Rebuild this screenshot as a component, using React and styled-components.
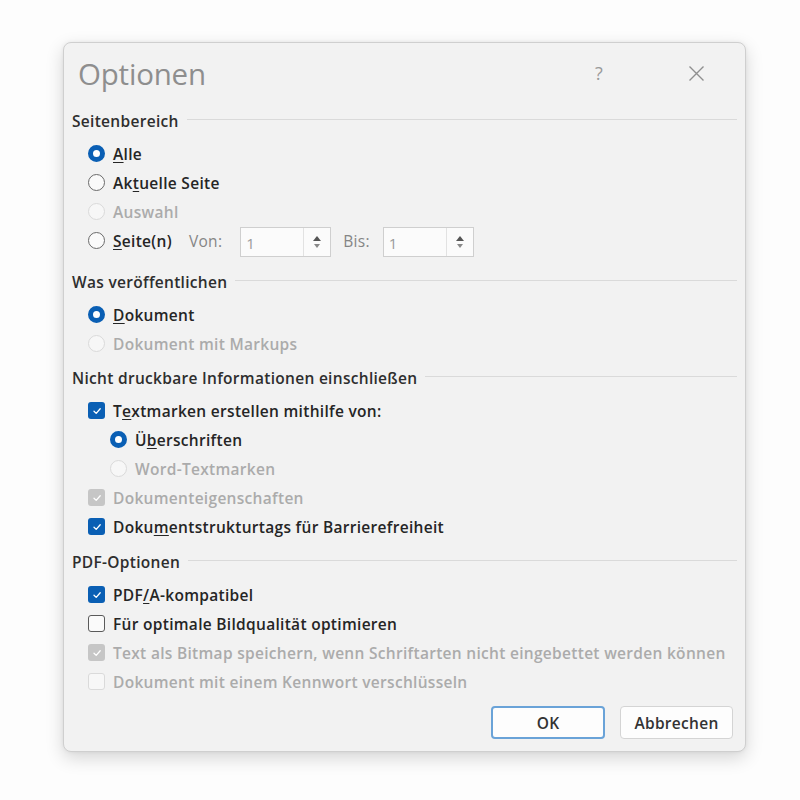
import React from "react";
import styled, { createGlobalStyle, css } from "styled-components";

const Global = createGlobalStyle`
  html, body { margin: 0; padding: 0; background: #fdfdfd; }
  body { font-family: "Open Sans", "Noto Sans", sans-serif; }
`;

const Page = styled.div`
  width: 800px;
  height: 800px;
  padding: 42px 0 0 63px;
  box-sizing: border-box;
`;

const Dialog = styled.div`
  width: 683px;
  height: 710px;
  box-sizing: border-box;
  background: #f2f2f2;
  border: 1px solid #cfcfcf;
  border-radius: 8px;
  box-shadow: 0 6px 18px rgba(0, 0, 0, 0.16), 0 0 4px rgba(0, 0, 0, 0.06);
  padding: 0 8px 12px 8px;
  display: flex;
  flex-direction: column;
`;

const TitleBar = styled.div`
  height: 62px;
  display: flex;
  align-items: center;
  padding-left: 6px;
  padding-right: 16px;
`;

const Title = styled.div`
  flex: 1;
  font-family: "Open Sans", sans-serif;
  font-weight: 400;
  font-size: 29.5px;
  color: #8e8e8e;
  letter-spacing: -0.2px;
`;

const TitleActions = styled.div`
  display: flex;
  gap: 47px;
`;

const TitleButton = styled.div`
  width: 50px;
  height: 30px;
  display: flex;
  justify-content: center;
  align-items: center;
  color: #9a9a9a;
  font-size: 18px;
`;

const Section = styled.div`
  margin-top: ${(p) => p.$mt}px;
  display: flex;
  flex-direction: column;
`;

const textStyle = css`
  font-size: 15.5px;
  font-weight: 600;
  letter-spacing: 0.3px;
`;

const Header = styled.div`
  height: 24px;
  display: flex;
  align-items: center;
  gap: 8px;
  ${textStyle};
  color: #2e2e2e;
  &::after {
    content: "";
    flex: 1;
    height: 1px;
    background: #dadada;
    margin-top: -3px;
  }
`;

const Rows = styled.div`
  padding-top: 6px;
  padding-left: 16px;
  display: flex;
  flex-direction: column;
`;

const Row = styled.div`
  height: 29px;
  display: flex;
  align-items: center;
  gap: 8px;
  padding-left: ${(p) => (p.$indent ? 22 : 0)}px;
  ${textStyle};
  color: ${(p) => (p.$disabled ? "#ababab" : "#252525")};
  white-space: nowrap;
`;

const RadioCircle = styled.span`
  width: 17px;
  height: 17px;
  box-sizing: border-box;
  border-radius: 50%;
  flex: none;
  ${(p) =>
    p.$checked
      ? css`
          background: #fff;
          border: 5.5px solid #0a5fb4;
        `
      : p.$disabled
      ? css`
          background: #f7f7f7;
          border: 1px solid #dadada;
        `
      : css`
          background: #fafafa;
          border: 1.5px solid #6a6a6a;
        `}
`;

const Box = styled.span`
  width: 17px;
  height: 17px;
  box-sizing: border-box;
  border-radius: 3px;
  flex: none;
  display: flex;
  align-items: center;
  justify-content: center;
  ${(p) =>
    p.$checked && !p.$disabled
      ? css`
          background: #0a5fb4;
        `
      : p.$checked && p.$disabled
      ? css`
          background: #c6c6c6;
        `
      : p.$disabled
      ? css`
          background: #f7f7f7;
          border: 1px solid #dadada;
        `
      : css`
          background: #fafafa;
          border: 1.5px solid #5a5a5a;
        `}
`;

const U = styled.span`
  text-decoration: underline;
  text-underline-offset: 2px;
  text-decoration-thickness: 1px;
`;

const Label = styled.span``;

const SpinLabel = styled.span`
  color: #858585;
  font-weight: 400;
  margin-left: ${(p) => p.$ml}px;
  margin-right: ${(p) => p.$mr}px;
`;

const Spin = styled.div`
  width: 91px;
  height: 30px;
  box-sizing: border-box;
  border: 1px solid #cfcfcf;
  background: #fbfbfb;
  display: flex;
  margin-top: 3px;
`;

const SpinField = styled.div`
  flex: 1;
  display: flex;
  align-items: flex-end;
  padding: 0 0 3px 5px;
  color: #9a9a9a;
  font-size: 15px;
  font-weight: 400;
  border-right: 1px solid #e2e2e2;
`;

const SpinButtons = styled.div`
  width: 26px;
  display: flex;
  flex-direction: column;
  align-items: center;
  justify-content: center;
  gap: 3px;
`;

const Footer = styled.div`
  margin-top: 10px;
  display: flex;
  justify-content: flex-end;
  gap: 15px;
  padding-right: 4px;
`;

const Button = styled.button`
  width: ${(p) => p.$w}px;
  height: 33px;
  box-sizing: border-box;
  background: #fdfdfd;
  border-radius: 4px;
  font-family: "Open Sans", sans-serif;
  ${textStyle};
  color: #333;
  border: ${(p) => (p.$primary ? "2px solid #6aa3d8" : "1px solid #d4d4d4")};
  padding: 0;
`;

function Radio({ checked, disabled, indent, children }) {
  return (
    <Row $disabled={disabled} $indent={indent}>
      <RadioCircle $checked={checked} $disabled={disabled} />
      <Label>{children}</Label>
    </Row>
  );
}

function Check({ checked, disabled, children }) {
  return (
    <Row $disabled={disabled}>
      <Box $checked={checked} $disabled={disabled}>
        {checked && (
          <svg width="10" height="10" viewBox="0 0 10 10">
            <path d="M2 5.2 L4.2 7.4 L8.2 2.8" fill="none" stroke="#fff" strokeWidth="1.3" strokeLinecap="round" strokeLinejoin="round" />
          </svg>
        )}
      </Box>
      <Label>{children}</Label>
    </Row>
  );
}

function SpinBox() {
  return (
    <Spin>
      <SpinField>1</SpinField>
      <SpinButtons>
        <svg width="8" height="5" viewBox="0 0 8 5"><path d="M0 5 L4 0 L8 5Z" fill="#555" /></svg>
        <svg width="6" height="4" viewBox="0 0 6 4"><path d="M0 0 L3 4 L6 0Z" fill="#888" /></svg>
      </SpinButtons>
    </Spin>
  );
}

export default function App() {
  return (
    <>
      <Global />
      <Page>
        <Dialog>
          <TitleBar>
            <Title>Optionen</Title>
            <TitleActions>
              <TitleButton>?</TitleButton>
              <TitleButton>
                <svg width="17" height="17" viewBox="0 0 17 17">
                  <path d="M1.5 1.5 L15.5 15.5 M15.5 1.5 L1.5 15.5" stroke="#8f8f8f" strokeWidth="1.4" />
                </svg>
              </TitleButton>
            </TitleActions>
          </TitleBar>

          <Section $mt={6}>
            <Header>Seitenbereich</Header>
            <Rows>
              <Radio checked><U>A</U>lle</Radio>
              <Radio>Ak<U>t</U>uelle Seite</Radio>
              <Radio disabled>Auswahl</Radio>
              <Row>
                <RadioCircle />
                <Label><U>S</U>eite(n)</Label>
                <SpinLabel $ml={9} $mr={10}>Von:</SpinLabel>
                <SpinBox />
                <SpinLabel $ml={4} $mr={5}>Bis:</SpinLabel>
                <SpinBox />
              </Row>
            </Rows>
          </Section>

          <Section $mt={15}>
            <Header>Was veröffentlichen</Header>
            <Rows>
              <Radio checked><U>D</U>okument</Radio>
              <Radio disabled>Dokument mit Markups</Radio>
            </Rows>
          </Section>

          <Section $mt={8}>
            <Header>Nicht druckbare Informationen einschließen</Header>
            <Rows>
              <Check checked>T<U>e</U>xtmarken erstellen mithilfe von:</Check>
              <Radio checked indent>Ü<U>b</U>erschriften</Radio>
              <Radio disabled indent>Word-Textmarken</Radio>
              <Check checked disabled>Dokumenteigenschaften</Check>
              <Check checked>Doku<U>m</U>entstrukturtags für Barrierefreiheit</Check>
            </Rows>
          </Section>

          <Section $mt={9}>
            <Header>PDF-Optionen</Header>
            <Rows>
              <Check checked>PDF<U>/</U>A-kompatibel</Check>
              <Check>Für optimale Bildqualität optimieren</Check>
              <Check checked disabled>Text als Bitmap speichern, wenn Schriftarten nicht eingebettet werden können</Check>
              <Check disabled>Dokument mit einem Kennwort verschlüsseln</Check>
            </Rows>
          </Section>

          <Footer>
            <Button $primary $w={114}>OK</Button>
            <Button $w={113}>Abbrechen</Button>
          </Footer>
        </Dialog>
      </Page>
    </>
  );
}
